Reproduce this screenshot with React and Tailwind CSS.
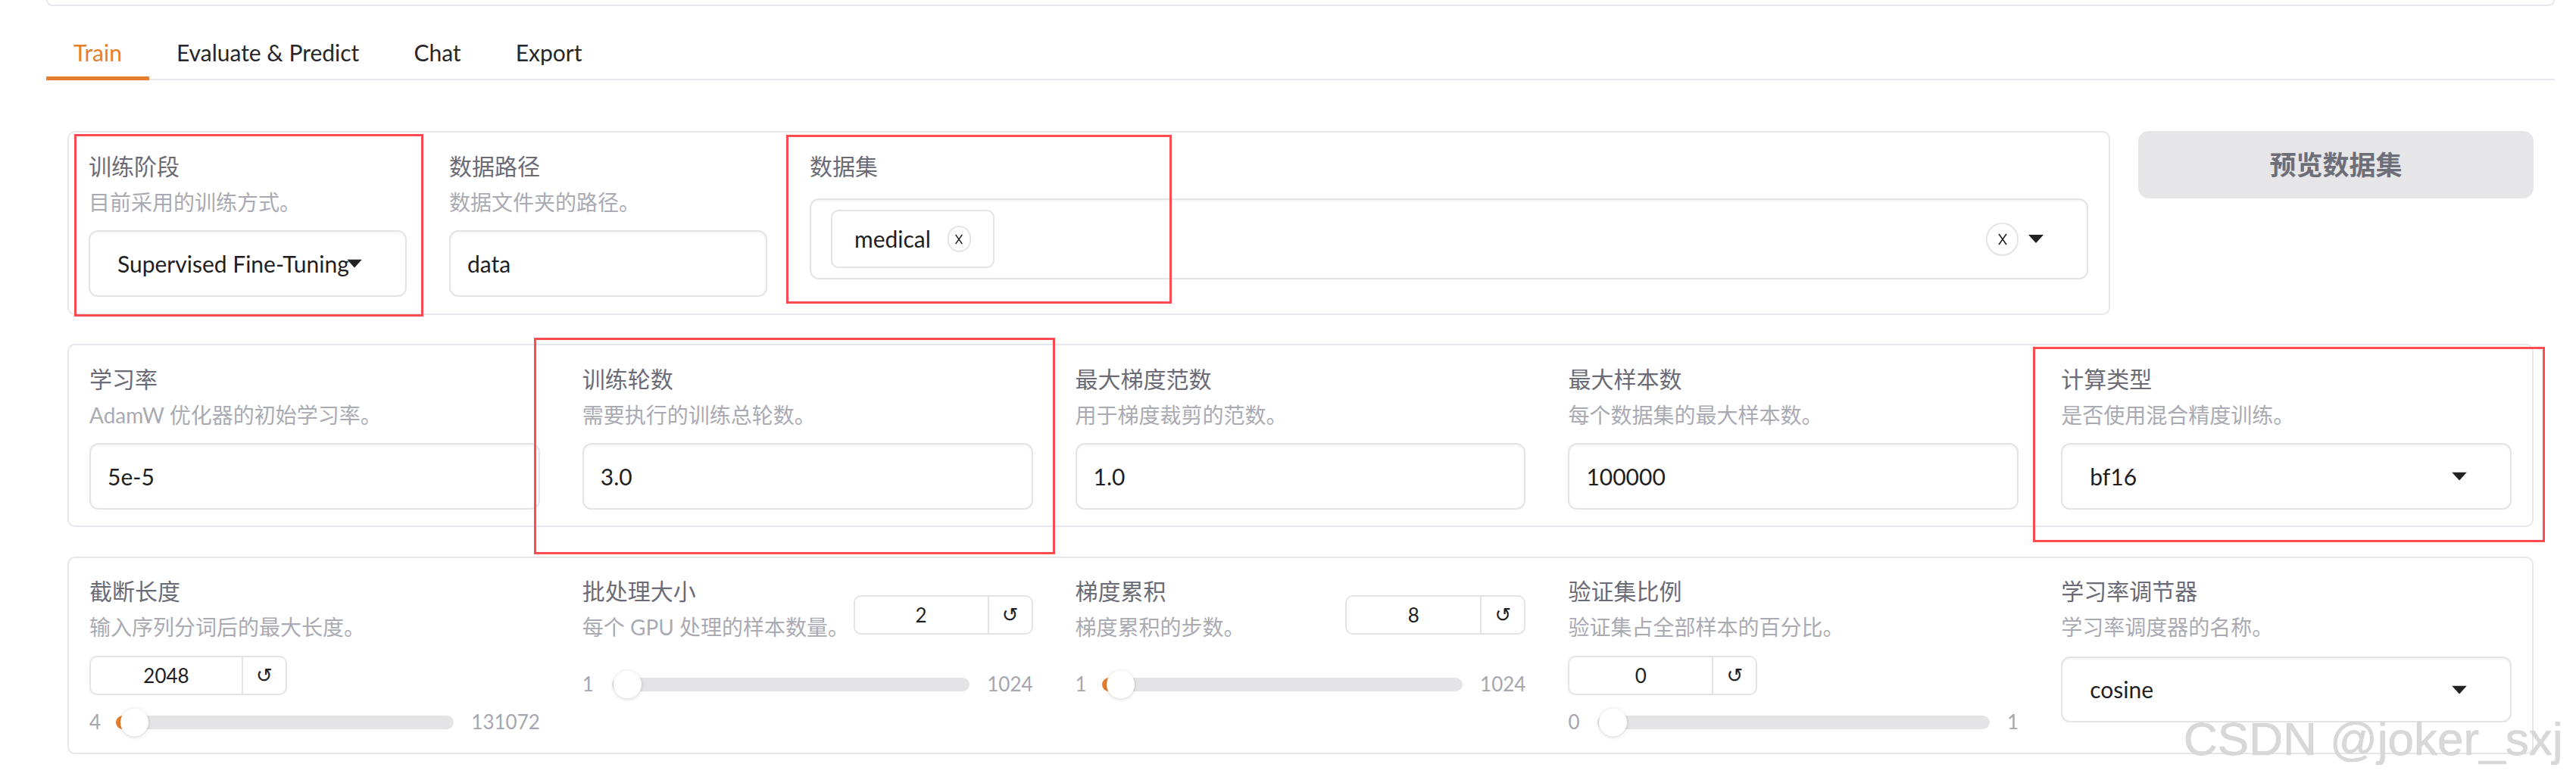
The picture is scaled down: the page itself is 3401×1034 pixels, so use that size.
import React from "react";

const Label = ({ children }) => (
  <div className="text-[30px] leading-[40px] text-[#6b6b76] whitespace-nowrap">{children}</div>
);

const Info = ({ children }) => (
  <div className="mt-[10px] text-[28px] leading-[36px] text-[#aaaab2] whitespace-nowrap">{children}</div>
);

const Caret = () => (
  <svg width="20" height="11" viewBox="0 0 20 11">
    <polygon points="0,0 20,0 10,11" fill="#222" />
  </svg>
);

const Cross = ({ w = 14, h = 18 }) => (
  <svg width={w} height={h} viewBox="0 0 14 18">
    <path d="M2 2 L12 16 M12 2 L2 16" stroke="#222" strokeWidth="1.6" fill="none" />
  </svg>
);

const TextBox = ({ value }) => (
  <div className="mt-[19px] h-[88px] rounded-[12px] border-2 border-[#e4e4e7] shadow-[inset_0_2px_3px_rgba(0,0,0,0.04)] flex items-center px-[22px] text-[30px] text-[#1f1f23]">
    {value}
  </div>
);

const Select = ({ value, className = "mt-[19px] h-[88px]" }) => (
  <div
    className={`${className} relative rounded-[12px] border-2 border-[#e4e4e7] shadow-[inset_0_2px_3px_rgba(0,0,0,0.04)] flex items-center pl-[36px] text-[30px] text-[#1f1f23] overflow-hidden whitespace-nowrap`}
  >
    {value}
    <div className="absolute right-[57px] top-1/2 -translate-y-1/2 flex">
      <Caret />
    </div>
  </div>
);

const NumBox = ({ value, w, className }) => (
  <div
    className={`${className} h-[52px] flex rounded-[10px] border-2 border-[#e4e4e7] bg-white text-[#1f1f23]`}
    style={{ width: w }}
  >
    <div className="flex-1 flex items-center justify-center text-[26px]">{value}</div>
    <div className="w-[58px] border-l-2 border-[#e4e4e7] flex items-center justify-center text-[26px] font-['DejaVu_Sans',sans-serif]">
      ↺
    </div>
  </div>
);

const Slider = ({ min, max, fill, className }) => (
  <div className={`${className} h-[37px] flex items-center text-[26px] text-[#a6a6ae]`}>
    <span>{min}</span>
    <div className="relative flex-1 h-[18px] ml-[24px] mr-[23px] rounded-full bg-[#e4e4e7]">
      {fill && <div className="absolute left-[-4px] top-0 h-full w-[26px] rounded-full bg-[#e67e2e]" />}
      <div className="absolute left-[2px] top-1/2 -translate-y-1/2 w-[37px] h-[37px] rounded-full bg-white shadow-[0_1px_5px_rgba(0,0,0,0.18)]" />
    </div>
    <span>{max}</span>
  </div>
);

const SliderCol = ({ label, info, value, min, max, wrap, w, fill }) =>
  wrap ? (
    <div>
      <Label>{label}</Label>
      <Info>{info}</Info>
      <NumBox value={value} w={w} className="mt-[20px]" />
      <Slider min={min} max={max} fill={fill} className="mt-[17px]" />
    </div>
  ) : (
    <div>
      <div className="flex justify-between items-start">
        <div>
          <Label>{label}</Label>
          <Info>{info}</Info>
        </div>
        <NumBox value={value} w={w} className="mt-[26px]" />
      </div>
      <Slider min={min} max={max} fill={fill} className="mt-[39px]" />
    </div>
  );

const RedBox = ({ className }) => (
  <div className={`absolute border-[3px] border-[#ff4a4f] pointer-events-none ${className}`} />
);

export default function App() {
  const tabs = ["Train", "Evaluate & Predict", "Chat", "Export"];

  return (
    <div className="relative w-[3401px] h-[1034px] overflow-hidden bg-white font-['Lato','Noto_Sans_CJK_SC',sans-serif]">
      <div className="ml-[61px] w-[3312px]">
        {/* cut-off box above the tabs */}
        <div className="h-[8px] border-x-2 border-b-2 border-[#e5e7eb] rounded-b-[12px]" />

        {/* tabs */}
        <div className="mt-[41px] flex border-b-2 border-[#e5e7eb]">
          {tabs.map((t, i) => (
            <div
              key={t}
              className={`px-[36px] pb-[12px] text-[30px] leading-[40px] -mb-[2px] border-b-[5px] ${
                i === 0 ? "text-[#e67e2e] border-[#e67e2e]" : "text-[#27272a] border-transparent"
              }`}
            >
              {t}
            </div>
          ))}
        </div>

        <div className="px-[28px]">
          {/* row 1 */}
          <div className="mt-[67px] flex items-start gap-[37px]">
            <div className="flex-1 flex gap-[56px] border-2 border-[#e5e7eb] rounded-[10px] pl-[26px] pr-[27px] pt-[24px] pb-[22px]">
              <div className="w-[420px]">
                <Label>训练阶段</Label>
                <Info>目前采用的训练方式。</Info>
                <Select value="Supervised Fine-Tuning" />
              </div>
              <div className="w-[420px]">
                <Label>数据路径</Label>
                <Info>数据文件夹的路径。</Info>
                <TextBox value="data" />
              </div>
              <div className="flex-1">
                <Label>数据集</Label>
                <div className="mt-[23px] h-[107px] rounded-[12px] border-2 border-[#e4e4e7] shadow-[inset_0_2px_3px_rgba(0,0,0,0.04)] flex items-center pl-[26px] pr-[57px]">
                  <div className="h-[77px] flex items-center gap-[22px] px-[29px] border-2 border-[#e4e4e7] rounded-[10px] text-[30px] text-[#1f1f23]">
                    medical
                    <div className="w-[31px] h-[35px] rounded-full border-2 border-[#e4e4e7] flex items-center justify-center">
                      <Cross w={12} h={16} />
                    </div>
                  </div>
                  <div className="flex-1" />
                  <div className="w-[43px] h-[44px] rounded-full border-2 border-[#e4e4e7] flex items-center justify-center">
                    <Cross />
                  </div>
                  <div className="ml-[13px] flex">
                    <Caret />
                  </div>
                </div>
              </div>
            </div>
            <button className="w-[522px] h-[89px] rounded-[14px] bg-[#e6e6e8] text-[35px] font-bold text-[#6e6e78]">
              预览数据集
            </button>
          </div>

          {/* row 2 */}
          <div className="mt-[38px] grid grid-cols-5 gap-x-[56px] border-2 border-[#e5e7eb] rounded-[10px] px-[27px] pt-[24px] pb-[21px]">
            <div>
              <Label>学习率</Label>
              <Info>AdamW 优化器的初始学习率。</Info>
              <TextBox value="5e-5" />
            </div>
            <div>
              <Label>训练轮数</Label>
              <Info>需要执行的训练总轮数。</Info>
              <TextBox value="3.0" />
            </div>
            <div>
              <Label>最大梯度范数</Label>
              <Info>用于梯度裁剪的范数。</Info>
              <TextBox value="1.0" />
            </div>
            <div>
              <Label>最大样本数</Label>
              <Info>每个数据集的最大样本数。</Info>
              <TextBox value="100000" />
            </div>
            <div>
              <Label>计算类型</Label>
              <Info>是否使用混合精度训练。</Info>
              <Select value="bf16" />
            </div>
          </div>

          {/* row 3 */}
          <div className="mt-[39px] grid grid-cols-5 gap-x-[56px] border-2 border-[#e5e7eb] rounded-[10px] px-[27px] pt-[23px] pb-[22px]">
            <SliderCol label="截断长度" info="输入序列分词后的最大长度。" value="2048" min="4" max="131072" wrap w={261} fill />
            <SliderCol label="批处理大小" info="每个 GPU 处理的样本数量。" value="2" min="1" max="1024" w={237} />
            <SliderCol label="梯度累积" info="梯度累积的步数。" value="8" min="1" max="1024" w={238} fill />
            <SliderCol label="验证集比例" info="验证集占全部样本的百分比。" value="0" min="0" max="1" wrap w={250} />
            <div>
              <Label>学习率调节器</Label>
              <Info>学习率调度器的名称。</Info>
              <Select value="cosine" className="mt-[21px] h-[87px]" />
            </div>
          </div>
        </div>
      </div>

      {/* annotation boxes */}
      <RedBox className="left-[98px] top-[177px] w-[461px] h-[241px]" />
      <RedBox className="left-[1038px] top-[178px] w-[509px] h-[223px]" />
      <RedBox className="left-[705px] top-[446px] w-[688px] h-[286px]" />
      <RedBox className="left-[2684px] top-[458px] w-[676px] h-[258px]" />

      {/* watermark */}
      <div className="absolute left-[2883px] top-[945px] text-[62px] leading-none text-[#d8d8d8] font-['Liberation_Sans',sans-serif] [text-shadow:0_0_1px_#b0b0b0] whitespace-nowrap">
        CSDN @joker_sxj
      </div>
    </div>
  );
}
